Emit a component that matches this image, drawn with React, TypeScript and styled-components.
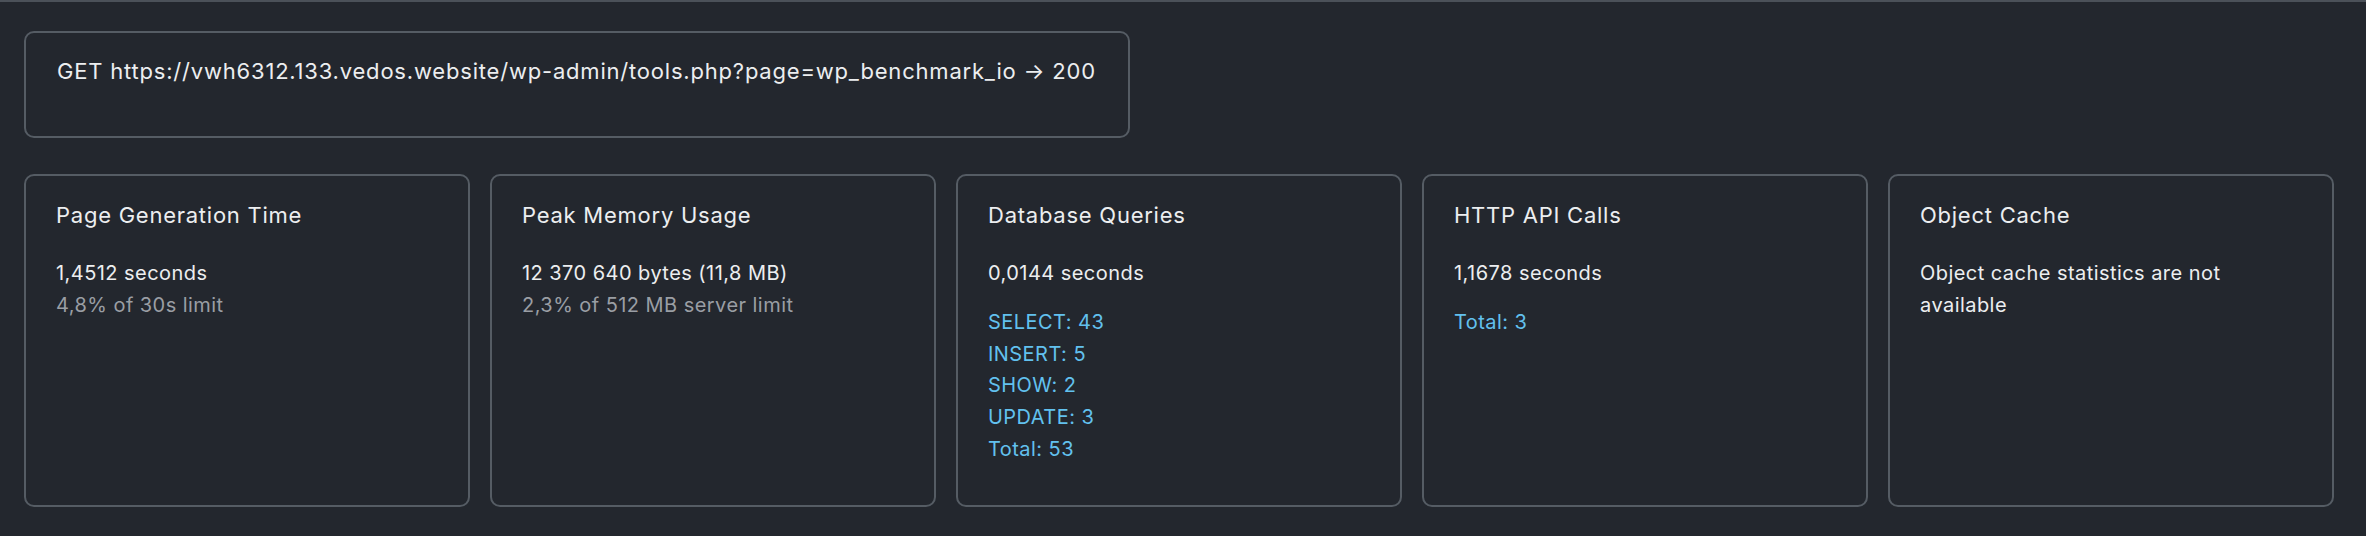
import React from 'react';
import styled, {createGlobalStyle} from 'styled-components';

const GlobalStyle = createGlobalStyle`
    html, body {
        margin: 0;
        padding: 0;
        background: #23272e;
    }
    body {
        font-family: Inter, 'Noto Sans', 'Liberation Sans', sans-serif;
        color: #eceef0;
        -webkit-font-smoothing: antialiased;
    }
`

type StatLine = {
    text: string
    tone?: 'main' | 'muted' | 'accent'
}

type StatCardProps = {
    title: string
    lines: StatLine[]
    details?: string[]
}

const cards: StatCardProps[] = [
    {
        title: 'Page Generation Time',
        lines: [{text: '1,4512 seconds'}, {text: '4,8% of 30s limit', tone: 'muted'}],
    },
    {
        title: 'Peak Memory Usage',
        lines: [{text: '12 370 640 bytes (11,8 MB)'}, {text: '2,3% of 512 MB server limit', tone: 'muted'}],
    },
    {
        title: 'Database Queries',
        lines: [{text: '0,0144 seconds'}],
        details: ['SELECT: 43', 'INSERT: 5', 'SHOW: 2', 'UPDATE: 3', 'Total: 53'],
    },
    {
        title: 'HTTP API Calls',
        lines: [{text: '1,1678 seconds'}],
        details: ['Total: 3'],
    },
    {
        title: 'Object Cache',
        lines: [{text: 'Object cache statistics are not available'}],
    },
]

const StatCard = (props: StatCardProps) => {
    return (
        <Card>
            <CardTitle>{props.title}</CardTitle>
            <Lines>
                {props.lines.map((line) => (
                    <Line key={line.text} tone={line.tone ?? 'main'}>{line.text}</Line>
                ))}
            </Lines>
            {props.details && (
                <Details>
                    {props.details.map((d) => (
                        <Line key={d} tone="accent">{d}</Line>
                    ))}
                </Details>
            )}
        </Card>
    );
};

export default function App() {
    return (
        <>
            <GlobalStyle/>
            <Page>
                <RequestBox>
                    <RequestLine>GET https://vwh6312.133.vedos.website/wp-admin/tools.php?page=wp_benchmark_io → 200</RequestLine>
                </RequestBox>
                <CardGrid>
                    {cards.map((c) => (
                        <StatCard key={c.title} {...c}/>
                    ))}
                </CardGrid>
            </Page>
        </>
    );
}

const Page = styled.main`
    box-sizing: border-box;
    min-height: 536px;
    border-top: 2px solid #4b5159;
    padding: 29px 32px 29px 24px;
    display: flex;
    flex-direction: column;
    align-items: flex-start;
    gap: 36px;
`
const RequestBox = styled.div`
    box-sizing: border-box;
    border: 2px solid #555c64;
    border-radius: 10px;
    padding: 22px 32px 48px 31px;
`
const RequestLine = styled.div`
    font-size: 22px;
    line-height: 33px;
    letter-spacing: 0.8px;
    color: #eceef0;
    white-space: nowrap;
`
const CardGrid = styled.div`
    align-self: stretch;
    display: grid;
    grid-template-columns: repeat(5, 1fr);
    gap: 20px;
`
const Card = styled.section`
    box-sizing: border-box;
    min-height: 333px;
    border: 2px solid #555c64;
    border-radius: 10px;
    padding: 23px 40px 24px 30px;
`
const CardTitle = styled.h3`
    margin: 0 0 26px;
    font-size: 22px;
    font-weight: 400;
    line-height: 33px;
    letter-spacing: 0.75px;
    color: #eceef0;
`
const Lines = styled.div`
    display: flex;
    flex-direction: column;
`
const Details = styled.div`
    display: flex;
    flex-direction: column;
    margin-top: 17px;
`
const Line = styled.div<{tone: 'main' | 'muted' | 'accent'}>`
    font-size: 20px;
    line-height: 31.75px;
    letter-spacing: 0.45px;
    color: ${(p) => p.tone === 'muted' ? '#9a9ea4' : p.tone === 'accent' ? '#62c1ee' : '#eceef0'};
`
